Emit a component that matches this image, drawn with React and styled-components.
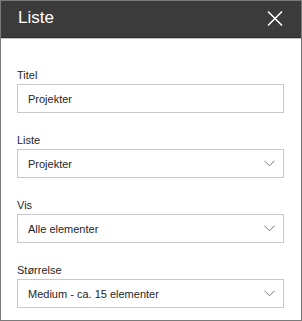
import React from 'react';
import styled, { createGlobalStyle } from 'styled-components';

// STYLES
const GlobalStyle = createGlobalStyle`
    html, body {
        margin: 0;
        padding: 0;
        background: #ffffff;
    }
    * {
        box-sizing: border-box;
    }
`
const Panel = styled.div`
    width: 302px;
    height: 321px;
    border: 1px solid #7a7a7a;
    background-color: white;
    display: flex;
    flex-direction: column;
    font-family: 'Liberation Sans', Arial, sans-serif;
`
const Header = styled.div`
    height: 37px;
    flex-shrink: 0;
    background-color: #3b3b3b;
    border-bottom: 1px solid #2b2b2b;
    box-shadow: 0 1px 0 #c6c6c6;
    display: flex;
    align-items: center;
    justify-content: space-between;
    padding: 0 17px 2px 17px;

    h1 {
        margin: 0;
        font-size: 17px;
        font-weight: normal;
        color: #ffffff;
    }
`
const CloseButton = styled.button`
    width: 18px;
    height: 18px;
    padding: 0;
    border: none;
    background: transparent;
    display: flex;
    align-items: center;
    justify-content: center;
    cursor: pointer;
`
const Body = styled.div`
    display: flex;
    flex-direction: column;
    gap: 20px;
    padding: 30px 17px 0 16px;
`
const Field = styled.div`
    display: flex;
    flex-direction: column;
    gap: 2px;
`
const Label = styled.label`
    font-size: 11px;
    line-height: 14px;
    color: #262626;
`
const Box = styled.div`
    height: 29px;
    width: 100%;
    border: 1px solid #c8c8c8;
    display: flex;
    align-items: center;
    justify-content: space-between;
    padding: 0 8px 0 10px;
    font-size: 11px;
    color: #262626;
    cursor: ${props => (props.$dropdown ? 'pointer' : 'text')};
`

const Chevron = () => (
    <svg width="11" height="7" viewBox="0 0 11 7">
        <path d="M0.5 0.8 L5.5 5.8 L10.5 0.8" fill="none" stroke="#777777" strokeWidth="1" />
    </svg>
)

const fields = [
    { label: 'Titel', value: 'Projekter' },
    { label: 'Liste', value: 'Projekter', dropdown: true },
    { label: 'Vis', value: 'Alle elementer', dropdown: true },
    { label: 'Størrelse', value: 'Medium - ca. 15 elementer', dropdown: true }
]

export default function App() {
    return (
        <Panel>
            <GlobalStyle />
            <Header>
                <h1>Liste</h1>
                <CloseButton aria-label="Luk">
                    <svg width="16" height="15" viewBox="0 0 16 15">
                        <path d="M1 0.5 L15 14.5 M15 0.5 L1 14.5" stroke="#ffffff" strokeWidth="1.5" />
                    </svg>
                </CloseButton>
            </Header>

            <Body>
                {fields.map(field => (
                    <Field key={field.label}>
                        <Label>{field.label}</Label>
                        <Box $dropdown={field.dropdown}>
                            <span>{field.value}</span>
                            {field.dropdown && <Chevron />}
                        </Box>
                    </Field>
                ))}
            </Body>
        </Panel>
    );
}
